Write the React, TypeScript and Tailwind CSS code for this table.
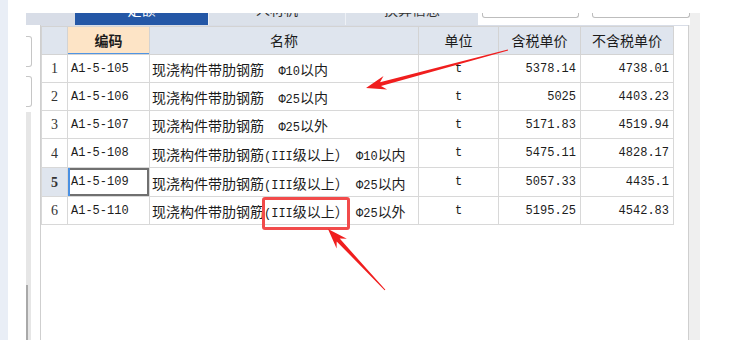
import React from 'react';

interface QuotaRow {
  no: number;
  code: string;
  name: string;
  unit: string;
  taxPrice: string;
  netPrice: string;
  height: number;
}

const rows: QuotaRow[] = [
  { no: 1, code: 'A1-5-105', name: '现浇构件带肋钢筋  Φ10以内', unit: 't', taxPrice: '5378.14', netPrice: '4738.01', height: 28 },
  { no: 2, code: 'A1-5-106', name: '现浇构件带肋钢筋  Φ25以内', unit: 't', taxPrice: '5025', netPrice: '4403.23', height: 28 },
  { no: 3, code: 'A1-5-107', name: '现浇构件带肋钢筋  Φ25以外', unit: 't', taxPrice: '5171.83', netPrice: '4519.94', height: 28 },
  { no: 4, code: 'A1-5-108', name: '现浇构件带肋钢筋(III级以上） Φ10以内', unit: 't', taxPrice: '5475.11', netPrice: '4828.17', height: 29 },
  { no: 5, code: 'A1-5-109', name: '现浇构件带肋钢筋(III级以上） Φ25以内', unit: 't', taxPrice: '5057.33', netPrice: '4435.1', height: 29 },
  { no: 6, code: 'A1-5-110', name: '现浇构件带肋钢筋(III级以上） Φ25以外', unit: 't', taxPrice: '5195.25', netPrice: '4542.83', height: 28 },
];

const SELECTED = 5;

const cjk = '"Noto Sans CJK SC", "Noto Sans", sans-serif';
const mono = '"Liberation Mono", "Noto Sans CJK SC", monospace';

// latin runs get the narrow mono face, the rest stays in the CJK face
function Mixed({ text }: { text: string }) {
  const parts = text.split(/([A-Za-z0-9().\-\sΦ]+)/).filter(Boolean);
  return (
    <>
      {parts.map((p, i) =>
        /^[A-Za-z0-9().\-\sΦ]+$/.test(p) ? (
          <span key={i} className="text-[12px] whitespace-pre font-['Liberation_Mono',monospace]">{p}</span>
        ) : (
          <span key={i} className="text-[14px] font-['Noto_Sans_CJK_SC',sans-serif]">{p}</span>
        )
      )}
    </>
  );
}

function Tabs() {
  return (
    <div className="flex h-[12px] shrink-0">
      <div className="w-[49px] bg-[#d8dde7]" />
      <div className="w-[133px] bg-[#2457a6] overflow-hidden flex justify-center">
        <span className="-mt-[12px] text-[14px] leading-[16px] text-white" style={{ fontFamily: cjk }}>定额</span>
      </div>
      <div className="w-[1px] bg-[#eef1f6]" />
      <div className="w-[136px] bg-[#dbe1ea] overflow-hidden flex justify-center">
        <span className="-mt-[12px] text-[14px] leading-[16px] text-[#333]" style={{ fontFamily: cjk }}>人材机</span>
      </div>
      <div className="w-[1px] bg-[#eef1f6]" />
      <div className="w-[132px] bg-[#dbe1ea] overflow-hidden flex justify-center">
        <span className="-mt-[12px] text-[14px] leading-[16px] text-[#333]" style={{ fontFamily: cjk }}>换算信息</span>
      </div>
      <div className="w-[4px]" />
      <div className="w-[97px] h-[5px] border border-t-0 border-[#bdbdbd] rounded-b-[3px]" />
      <div className="w-[13px]" />
      <div className="w-[98px] h-[5px] border border-t-0 border-[#bdbdbd] rounded-b-[3px]" />
      <div className="w-[10px] bg-[#efefef]" />
    </div>
  );
}

function LeftPanel() {
  return (
    <div className="w-[14px] flex flex-col">
      <div className="h-[11px]" />
      <div className="w-[6px] h-[31px] border border-l-0 border-[#c6c6c6] rounded-r-[3px]" />
      <div className="h-[9px]" />
      <div className="w-[6px] h-[31px] border border-l-0 border-[#c6c6c6] rounded-r-[3px]" />
      <div className="h-[5px]" />
      <div className="w-[5px] flex-1 bg-[#e6e6e6] flex flex-col">
        <div className="h-[173px]" />
        <div className="w-[2px] flex-1 bg-[#a9a9a9]" />
      </div>
    </div>
  );
}

function QuotaTable() {
  const th = 'border border-[#d3d3d3] bg-[#dfe5ee] text-[14px] font-normal text-[#1c1c1c] text-center';
  const td = 'border border-[#d8d8d8] text-[#1c1c1c]';
  return (
    <table className="table-fixed border-collapse w-[632px]" style={{ fontFamily: cjk }}>
      <colgroup>
        <col className="w-[26px]" />
        <col className="w-[82px]" />
        <col className="w-[269px]" />
        <col className="w-[80px]" />
        <col className="w-[82px]" />
        <col className="w-[93px]" />
      </colgroup>
      <thead>
        <tr className="h-[28px]">
          <th className={th} />
          <th className="border border-[#d3d3d3] bg-[#fde4c6] text-[14px] font-bold text-[#1c1c1c] text-center shadow-[inset_0_-1px_0_#4f94e3]">编码</th>
          <th className={th}>名称</th>
          <th className={th}>单位</th>
          <th className={th}>含税单价</th>
          <th className={th}>不含税单价</th>
        </tr>
      </thead>
      <tbody>
        {rows.map((r) => {
          const sel = r.no === SELECTED;
          return (
            <tr key={r.no} style={{ height: r.height }}>
              <td
                className={`${td} text-center text-[14px] text-[#333] ${sel ? 'bg-[#dfe5ee] font-bold' : 'bg-white'}`}
                style={{ fontFamily: '"Liberation Serif", serif' }}
              >
                {r.no}
              </td>
              <td
                className={`${td} pl-[3px] text-[12px] whitespace-nowrap ${sel ? 'shadow-[inset_2px_0_0_#4a90e2,inset_0_0_0_2px_#707070]' : ''}`}
                style={{ fontFamily: mono }}
              >
                {r.code}
              </td>
              <td className={`${td} pl-[2px] whitespace-nowrap overflow-hidden`}>
                <Mixed text={r.name} />
              </td>
              <td className={`${td} text-center text-[12px]`} style={{ fontFamily: mono }}>{r.unit}</td>
              <td className={`${td} text-right pr-[4px] text-[12px]`} style={{ fontFamily: mono }}>{r.taxPrice}</td>
              <td className={`${td} text-right pr-[4px] text-[12px]`} style={{ fontFamily: mono }}>{r.netPrice}</td>
            </tr>
          );
        })}
      </tbody>
    </table>
  );
}

function Annotations() {
  return (
    <>
      {/* red highlight box */}
      <div className="absolute left-[262px] top-[197px] w-[88px] h-[33px] border-[3px] border-[#f24b4b] rounded-[3px]" />
      <svg className="absolute left-0 top-0 pointer-events-none" width="736" height="340">
        <polygon
          fill="#f01e1e"
          points="508.13,50.48 381,86 387.1,89.6 366,88 383.5,76 380,82.2 507.87,49.52"
        />
        <polygon
          fill="#f01e1e"
          points="385.4,289.7 339.7,238.6 346.8,238.8 328,229 336.6,248.4 336.7,241.4 384.6,290.3"
        />
      </svg>
    </>
  );
}

export default function App() {
  return (
    <div className="relative w-[736px] h-[340px] bg-white flex overflow-hidden">
      <div className="w-[8px] bg-[#e9eef6]" />
      <div className="w-[18px]" />
      <div className="w-[674px] flex flex-col">
        <div className="h-[13px] shrink-0" />
        <Tabs />
        <div className="flex flex-1">
          <LeftPanel />
          <div className="w-[649px] border-l border-r border-[#cfcfcf] bg-white">
            <div className="h-[1px] bg-[#d8dde7]" />
            <QuotaTable />
          </div>
          <div className="w-[11px] bg-[#efefef]" />
        </div>
      </div>
      <Annotations />
    </div>
  );
}
